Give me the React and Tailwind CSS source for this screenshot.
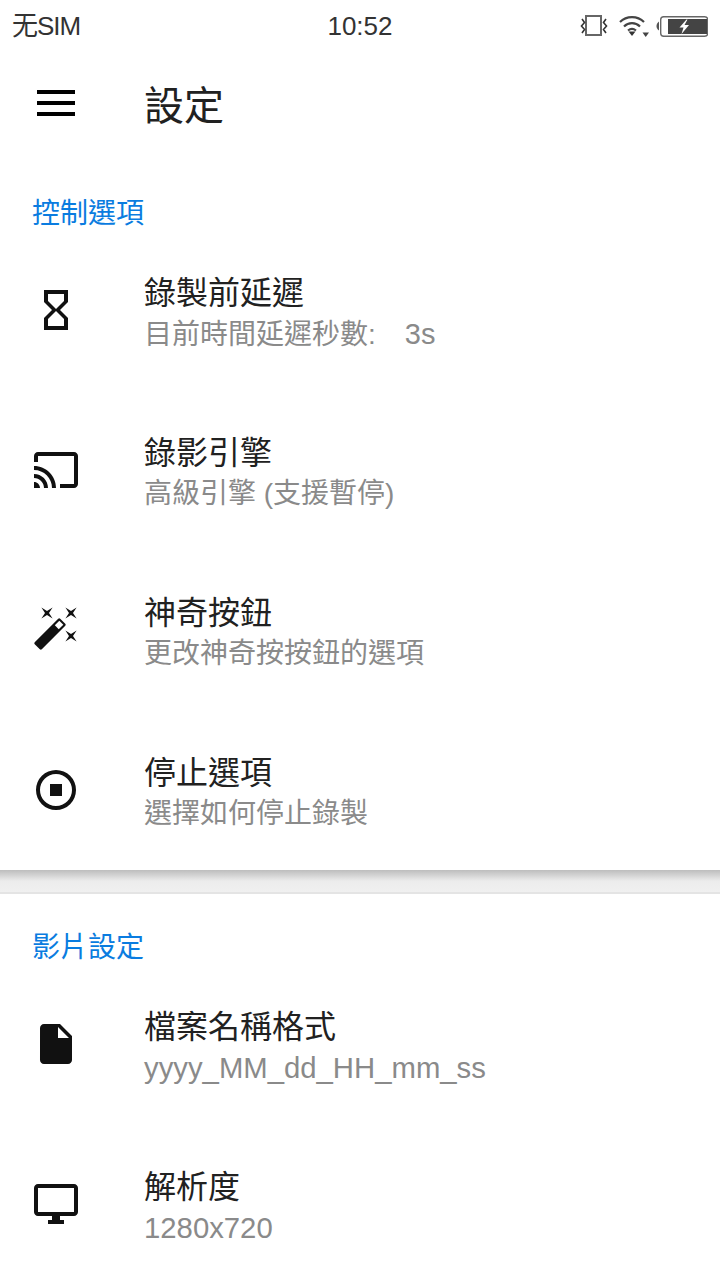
import React from 'react';

const HourglassIcon = () => (
  <svg viewBox="0 0 24 24" className="w-12 h-12 fill-[#111]">
    <path d="M6 2v6h.01L6 8.01 10 12l-4 4 .01.01H6V22h12v-5.99h-.01L18 16l-4-4 4-3.99-.01-.01H18V2H6zm10 14.5V20H8v-3.5l4-4 4 4zm-4-5l-4-4V4h8v3.5l-4 4z" />
  </svg>
);

const CastIcon = () => (
  <svg viewBox="0 0 24 24" className="w-12 h-12 fill-[#111]">
    <path d="M21 3H3c-1.1 0-2 .9-2 2v3h2V5h18v14h-7v2h7c1.1 0 2-.9 2-2V5c0-1.1-.9-2-2-2zM1 18v3h3c0-1.66-1.34-3-3-3zm0-4v2c2.76 0 5 2.24 5 5h2c0-3.87-3.13-7-7-7zm0-4v2c4.97 0 9 4.03 9 9h2c0-6.08-4.93-11-11-11z" />
  </svg>
);

const sparkle = 'M-2.8-2.8L0-1l2.800-1.800L1 0l1.800 2.800L0 1l-2.800 1.800L-1 0z';

const WandIcon = () => (
  <svg viewBox="0 0 24 24" className="w-12 h-12 fill-[#111]">
    <g transform="rotate(-45 9 14)">
      <rect x="0" y="11.500" width="18" height="5" rx="0.7" />
      <rect x="13.800" y="12.600" width="3.200" height="2.800" fill="#fff" />
    </g>
    <path transform="translate(7.500 3.500)" d={sparkle} />
    <path transform="translate(19.500 3.500)" d={sparkle} />
    <path transform="translate(19.500 15)" d={sparkle} />
  </svg>
);

const StopIcon = () => (
  <svg viewBox="0 0 24 24" className="w-12 h-12 fill-[#111]">
    <path fillRule="evenodd" d="M12 2a10 10 0 1 0 0 20 10 10 0 0 0 0-20zm0 18a8 8 0 1 1 0-16 8 8 0 0 1 0 16z" />
    <path d="M9 9h6v6H9z" />
  </svg>
);

const FileIcon = () => (
  <svg viewBox="0 0 24 24" className="w-12 h-12 fill-[#111]">
    <path d="M6 2c-1.100 0-1.990.9-1.990 2L4 20c0 1.100.89 2 1.990 2H18c1.100 0 2-.9 2-2V8l-6-6H6zm7 7V3.500L18.500 9H13z" />
  </svg>
);

const MonitorIcon = () => (
  <svg viewBox="0 0 24 24" className="w-12 h-12 fill-[#111]">
    <path d="M21 2H3c-1.100 0-2 .9-2 2v12c0 1.100.9 2 2 2h7v2H8v2h8v-2h-2v-2h7c1.100 0 2-.9 2-2V4c0-1.100-.9-2-2-2zm0 14H3V4h18v12z" />
  </svg>
);

const StatusIcons = () => (
  <div className="flex items-center">
    {/* vibrate */}
    <svg viewBox="0 0 28 24" className="w-[28px] h-[24px] mr-[11px]">
      <rect x="6" y="2" width="15" height="19" fill="none" stroke="#666" strokeWidth="2" />
      <path d="M2 5l2.500 3.500L1.500 12 4.500 15.500 2 19M26 5l-2.500 3.500 3 3.500-3 3.500L26 19" fill="none" stroke="#333" strokeWidth="1.600" />
    </svg>
    {/* wifi */}
    <svg viewBox="0 0 30 24" className="w-[30px] h-[24px] mr-[7px]">
      <path d="M1 8C7.500 1.500 18.500 1.500 25 8" fill="none" stroke="#444" strokeWidth="2.200" />
      <path d="M5 12.500c4.500-4.500 11.500-4.500 16 0" fill="none" stroke="#444" strokeWidth="2.200" />
      <path d="M9 16.500c2.500-2 5.500-2 8 0" fill="none" stroke="#444" strokeWidth="2.200" />
      <path d="M9.500 17.500h7L13 22z" fill="#333" />
      <path d="M23.500 18.500h6.500L26.700 23z" fill="#444" />
    </svg>
    {/* battery */}
    <svg viewBox="0 0 52 24" className="w-[52px] h-[24px]">
      <path d="M3 7.500C1 9 .5 10.500.5 12s.5 3 2.500 4.500z" fill="#555" />
      <rect x="4.700" y="2.700" width="47" height="19.600" rx="3" fill="#fff" stroke="#666" strokeWidth="1.400" />
      <rect x="12" y="5" width="39" height="15" fill="#444" />
      <path d="M30.500 5.500L23.500 13.500h4l-2 6.500 7.500-9h-4.500l3-5.500z" fill="#fff" />
    </svg>
  </div>
);

const Row = ({ icon, title, sub }) => (
  <div className="flex items-center h-[160px]">
    <div className="w-[144px] pl-8 shrink-0">{icon}</div>
    <div className="pt-2">
      <div className="text-[32px] leading-[40px] text-[#212121]">{title}</div>
      <div className="text-[28px] leading-[42px] text-[#8a8a8a]">{sub}</div>
    </div>
  </div>
);

const SectionTitle = ({ children }) => (
  <div className="flex items-end h-[70px] pl-8 text-[28px] leading-[32px] text-[#0a7ce0]">{children}</div>
);

export default function App() {
  return (
    <div className="w-[720px] h-[1280px] overflow-hidden bg-white" style={{ fontFamily: '"Liberation Sans", "Noto Sans CJK TC", sans-serif' }}>
      {/* status bar */}
      <div className="grid grid-cols-3 items-center h-[48px] px-3 text-[#333]">
        <span className="text-[26px] leading-[50px] tracking-[-1px]">无SIM</span>
        <span className="text-center text-[26px] leading-[52px]">10:52</span>
        <div className="flex justify-end"><StatusIcons /></div>
      </div>

      {/* toolbar */}
      <div className="flex items-center h-[112px]">
        <div className="w-[144px] pl-8 shrink-0">
          <svg viewBox="0 0 24 24" className="w-12 h-12 fill-black">
            <path d="M2.500 5v2h19V5zM2.500 10.500v2h19v-2zM2.500 16v2h19v-2z" />
          </svg>
        </div>
        <h1 className="text-[40px] leading-[52px] pt-1 font-normal text-[#212121]">設定</h1>
      </div>

      <SectionTitle>控制選項</SectionTitle>
      <Row icon={<HourglassIcon />} title="錄製前延遲" sub={<>目前時間延遲秒數:<span className="ml-[29px] text-[29px]">3s</span></>} />
      <Row icon={<CastIcon />} title="錄影引擎" sub="高級引擎 (支援暫停)" />
      <Row icon={<WandIcon />} title="神奇按鈕" sub="更改神奇按按鈕的選項" />
      <Row icon={<StopIcon />} title="停止選項" sub="選擇如何停止錄製" />

      {/* divider between cards */}
      <div className="h-[24px] border-b-2 border-[#e4e4e4] bg-gradient-to-b from-[#bdbdbd] via-[#ececec] via-50% to-[#f0f0f0]" />

      <SectionTitle>影片設定</SectionTitle>
      <Row icon={<FileIcon />} title="檔案名稱格式" sub={<span className="text-[29.3px]">yyyy_MM_dd_HH_mm_ss</span>} />
      <Row icon={<MonitorIcon />} title="解析度" sub={<span className="text-[29.3px]">1280x720</span>} />
    </div>
  );
}
